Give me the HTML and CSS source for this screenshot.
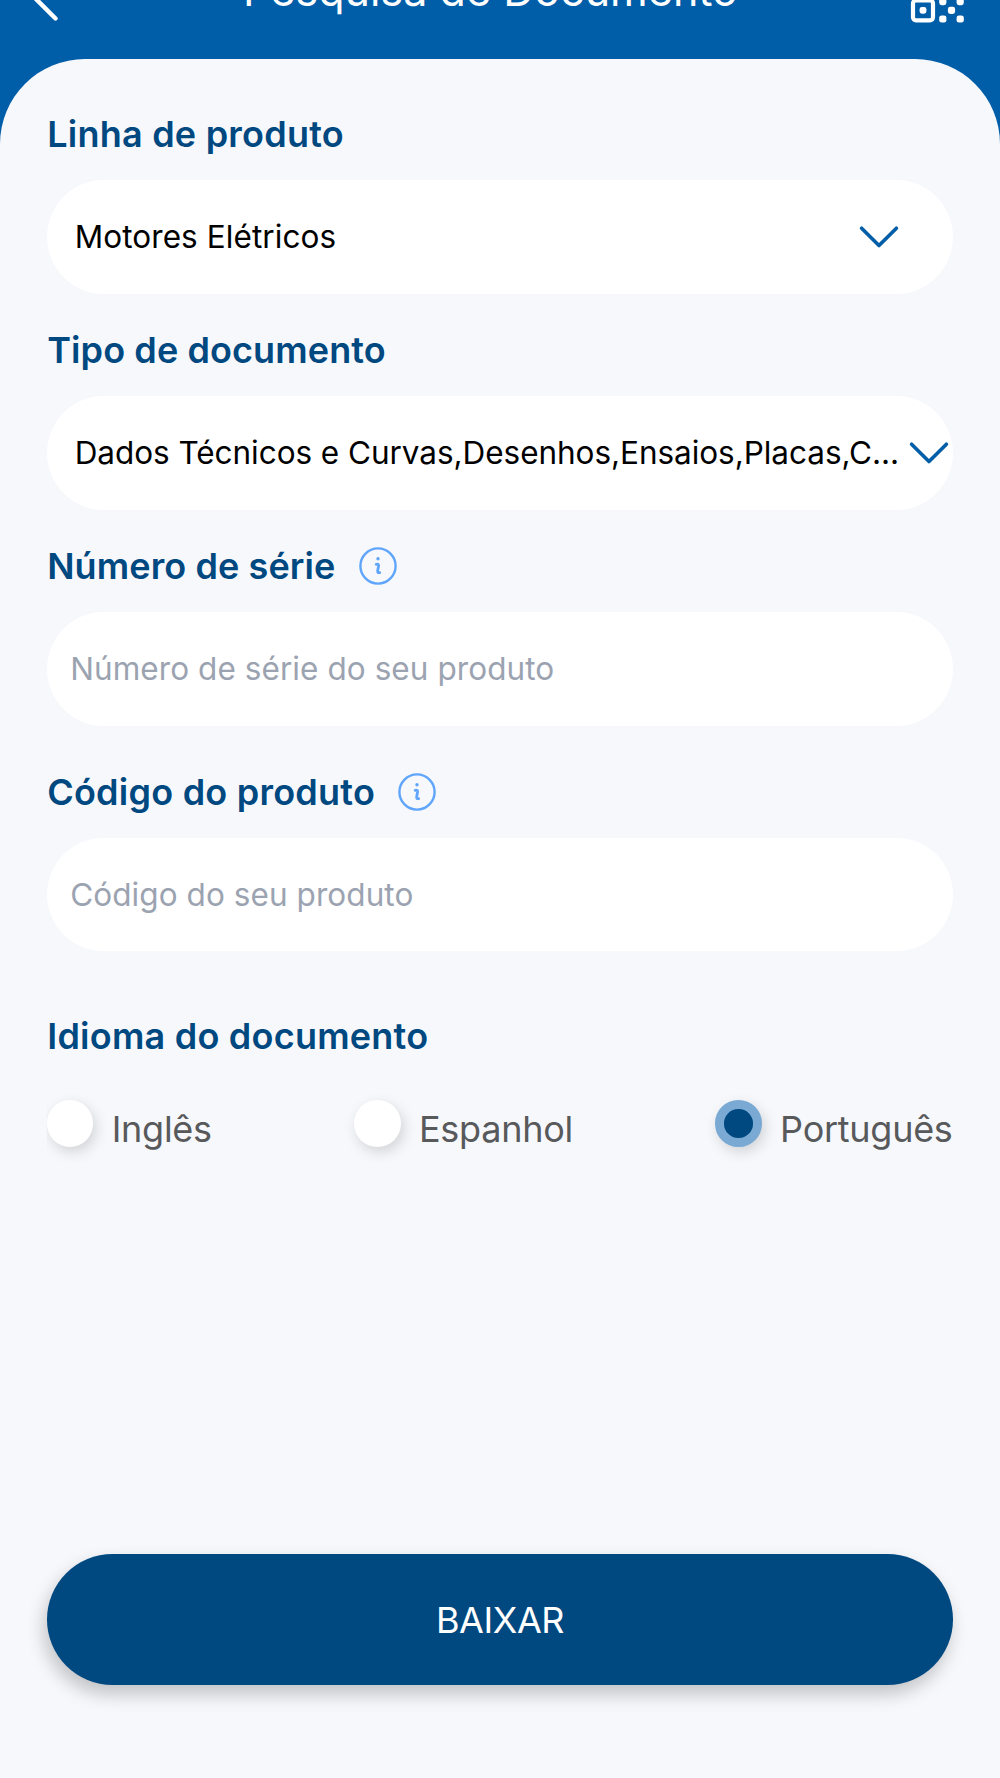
FILE: index.html
```
<!DOCTYPE html>
<html lang="pt-BR">
<head>
<meta charset="utf-8">
<title>Pesquisa de Documento</title>
<link rel="stylesheet" href="styles.css">
</head>
<body>
<div class="screen">
  <header class="header">
    <svg class="back" viewBox="0 0 36 60"><path d="M32.5 57.5 5 30 32.5 2.5"/></svg>
    <h1 class="title">Pesquisa de Documento</h1>
    <svg class="qr" viewBox="0 0 54 54">
      <g class="qr-frame"><rect x="3" y="3" width="20" height="20" rx="3"/><rect x="31" y="3" width="20" height="20" rx="3"/><rect x="3" y="31.3" width="20" height="20" rx="3"/></g>
      <g class="qr-dots"><rect x="9.6" y="9.6" width="6.8" height="6.8" rx="2.4"/><rect x="37.6" y="9.6" width="6.8" height="6.8" rx="2.4"/><rect x="9.6" y="37.9" width="6.8" height="6.8" rx="2.4"/><rect x="29.2" y="29" width="7.2" height="7.2" rx="2.4"/><rect x="46.6" y="29" width="7.2" height="7.2" rx="2.4"/><rect x="37.9" y="37.7" width="7.2" height="7.2" rx="2.4"/><rect x="29.2" y="46.4" width="7.2" height="7.2" rx="2.4"/><rect x="46.6" y="46.4" width="7.2" height="7.2" rx="2.4"/></g>
    </svg>
  </header>
  <main class="panel">
    <section class="group">
      <h2 class="label">Linha de produto</h2>
      <div class="field select">
        <span class="value">Motores Elétricos</span>
        <svg class="chevron" viewBox="0 0 40 24"><path d="M2.6 3.2 20 20.6 37.4 3.2"/></svg>
      </div>
    </section>
    <section class="group">
      <h2 class="label label-tight">Tipo de documento</h2>
      <div class="field select select-full">
        <span class="value value-long">Dados Técnicos e Curvas,Desenhos,Ensaios,Placas,C...</span>
        <svg class="chevron" viewBox="0 0 40 24"><path d="M2.6 3.2 20 20.6 37.4 3.2"/></svg>
      </div>
    </section>
    <section class="group">
      <h2 class="label label-tight">Número de série
        <svg class="info" viewBox="0 0 38 38"><circle cx="19" cy="19" r="17.6"/><circle class="info-dot" cx="19" cy="11.8" r="1.7"/><path class="info-stem" d="M17.2 17.4q2.8-.8 2.4 1.6l-.9 4.6q-.4 2.6 2 2"/></svg>
      </h2>
      <div class="field"><span class="placeholder">Número de série do seu produto</span></div>
    </section>
    <section class="group">
      <h2 class="label">Código do produto
        <svg class="info" viewBox="0 0 38 38"><circle cx="19" cy="19" r="17.6"/><circle class="info-dot" cx="19" cy="11.8" r="1.7"/><path class="info-stem" d="M17.2 17.4q2.8-.8 2.4 1.6l-.9 4.6q-.4 2.6 2 2"/></svg>
      </h2>
      <div class="field"><span class="placeholder">Código do seu produto</span></div>
    </section>
    <section class="language">
      <h2 class="label">Idioma do documento</h2>
      <div class="options">
        <div class="option"><span class="radio"></span><span class="option-text">Inglês</span></div>
        <div class="option"><span class="radio"></span><span class="option-text">Espanhol</span></div>
        <div class="option"><span class="radio radio-checked"></span><span class="option-text">Português</span></div>
      </div>
    </section>
    <button class="download">BAIXAR</button>
  </main>
</div>
</body>
</html>
```
FILE: styles.css
```
* { box-sizing: border-box; }

body {
  margin: 0;
  background: #005da8;
  font-family: Inter, "Liberation Sans", sans-serif;
}

.screen {
  display: flex;
  flex-direction: column;
  width: 1000px;
  height: 1778px;
  overflow: hidden;
}

/* The bar is scrolled partly above the top of the screen. */
.header {
  flex: none;
  display: flex;
  align-items: center;
  justify-content: space-between;
  height: 137px;
  margin-top: -78px;
  padding: 0 36px 0 23px;
  background: #005da8;
}

.title {
  margin: 0 0 2px 12px;
  color: #fff;
  font-size: 43px;
  font-weight: 400;
  line-height: 52px;
  letter-spacing: 0.04px;
}

.back {
  width: 36px;
  height: 60px;
  fill: none;
  stroke: #fff;
  stroke-width: 4.4;
  stroke-linecap: round;
  stroke-linejoin: round;
}

.qr {
  width: 54px;
  height: 54px;
  margin-top: 11px;
}

.qr-frame { fill: none; stroke: #fff; stroke-width: 4.2; }
.qr-dots { fill: #fff; }

.panel {
  flex: 1;
  display: flex;
  flex-direction: column;
  padding: 53px 46.7px 93.5px;
  border-radius: 85px 85px 0 0;
  background: #f7f8fc;
}

.group {
  display: flex;
  flex-direction: column;
  gap: 24px;
  margin-bottom: 34.7px;
}

.group:nth-of-type(3) { margin-bottom: 43.9px; }
.group:nth-of-type(4) { margin-bottom: 62.8px; }

.label {
  display: flex;
  align-items: center;
  gap: 23px;
  margin: 0;
  padding-left: 0.5px;
  color: #004880;
  font-size: 36px;
  font-weight: 600;
  line-height: 44px;
  letter-spacing: 0.23px;
}

.label-tight { letter-spacing: 0.1px; }

.info {
  width: 38px;
  height: 38px;
  fill: none;
  stroke: #5fa5fb;
  stroke-width: 2.4;
  stroke-linecap: round;
}

.info-dot { fill: #5fa5fb; stroke: none; }
.info-stem { stroke-width: 2.8; }

.field {
  display: flex;
  align-items: center;
  height: 113.5px;
  padding: 0 23.5px;
  border-radius: 57px;
  background: #fff;
  font-size: 31.5px;
  line-height: 38px;
  white-space: nowrap;
}

.select {
  justify-content: space-between;
  padding: 0 54.3px 0 28px;
}

.select-full { padding-right: 4.8px; }

.value { color: #000; letter-spacing: 0.08px; }
.value-long { letter-spacing: -0.05px; }
.placeholder { color: #9ba3b1; letter-spacing: 0.07px; }

.chevron {
  flex: none;
  width: 40px;
  height: 24px;
  fill: none;
  stroke: #005da8;
  stroke-width: 3.6;
  stroke-linecap: round;
  stroke-linejoin: round;
}

/* Shadows are cut at the left content edge. */
.options {
  display: flex;
  justify-content: space-between;
  margin-top: 42.4px;
  clip-path: inset(-30px -30px -30px 0);
}

.option {
  display: flex;
  align-items: flex-start;
  gap: 18.3px;
}

.option:last-child { margin-right: 0.7px; }

.radio {
  width: 46.7px;
  height: 46.7px;
  border-radius: 50%;
  background: #fff;
  box-shadow: 3px 5px 14px rgba(0, 0, 0, 0.15);
}

.radio-checked {
  border: 9.4px solid #7aaad4;
  background: #004880;
}

.option-text {
  padding-top: 7px;
  color: #58595b;
  font-size: 36px;
  line-height: 44px;
  letter-spacing: -0.27px;
}

.download {
  height: 130.5px;
  margin-top: auto;
  padding: 2px 0 0;
  border: 0;
  border-radius: 66px;
  background: #004880;
  box-shadow: -3px 9px 18px rgba(0, 0, 0, 0.22);
  color: #fff;
  font-family: inherit;
  font-size: 36px;
  line-height: 44px;
  letter-spacing: -0.4px;
}
```
